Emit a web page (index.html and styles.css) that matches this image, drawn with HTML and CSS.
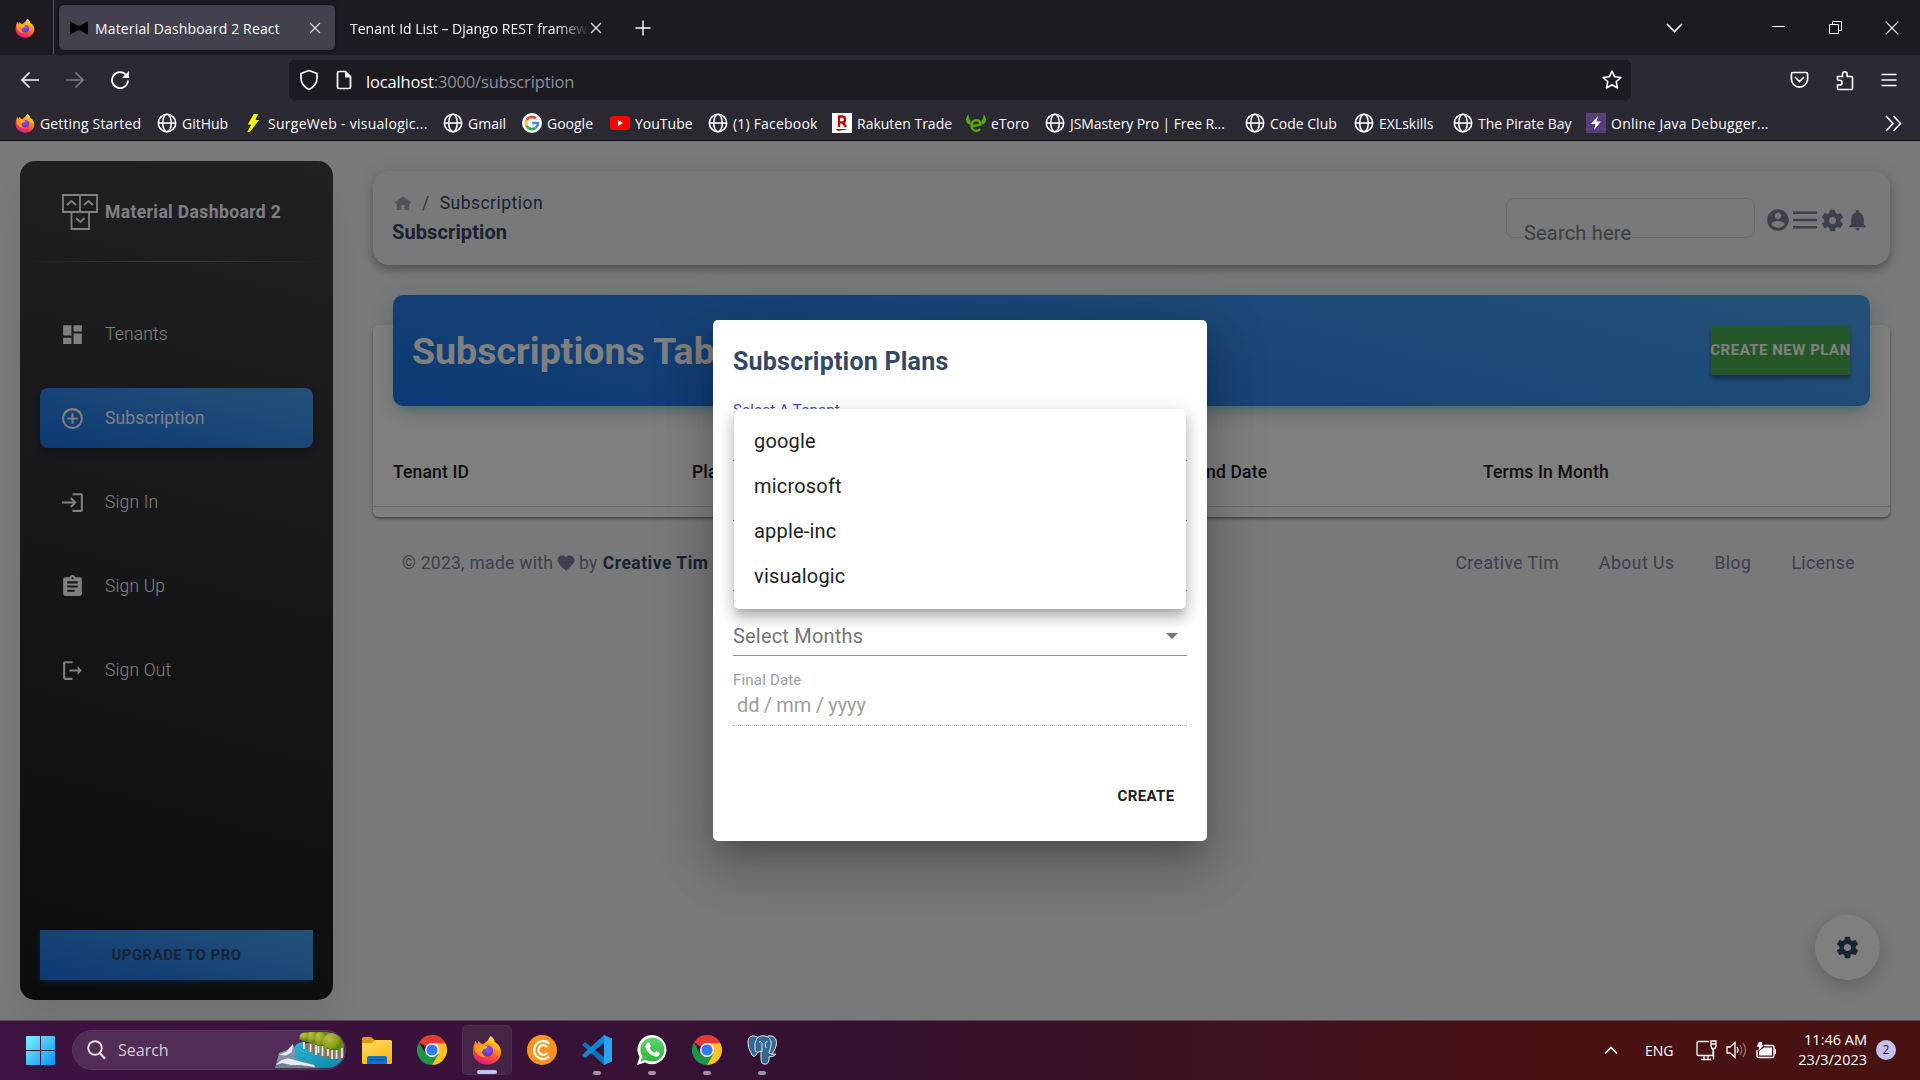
FILE: index.html
```html
<!DOCTYPE html>
<html lang="en">
<head>
<meta charset="utf-8">
<title>Material Dashboard 2 React</title>
<link rel="stylesheet" href="styles.css">
</head>
<body>
<svg class="defs" aria-hidden="true">
  <defs>
    <linearGradient id="ffBody" x1="0.8" y1="0" x2="0.3" y2="1"><stop offset="0" stop-color="#fff44f"/><stop offset=".35" stop-color="#ffa01f"/><stop offset=".65" stop-color="#ff4a3d"/><stop offset="1" stop-color="#e31587"/></linearGradient>
    <radialGradient id="ffCore" cx=".5" cy=".3" r=".8"><stop offset="0" stop-color="#a14bf5"/><stop offset="1" stop-color="#4a36b8"/></radialGradient>
    <linearGradient id="winTile" x1="0" y1="0" x2="1" y2="1"><stop offset="0" stop-color="#7ff0ff"/><stop offset="1" stop-color="#0a93f5"/></linearGradient>
    <linearGradient id="folderFront" x1="0" y1="0" x2="0.6" y2="1"><stop offset="0" stop-color="#ffdc70"/><stop offset="1" stop-color="#fcb90b"/></linearGradient>
    <linearGradient id="waFill" x1="0" y1="0" x2="0" y2="1"><stop offset="0" stop-color="#5fd66d"/><stop offset="1" stop-color="#2bb33e"/></linearGradient>
    <linearGradient id="river" x1="0" y1="0" x2="1" y2="1"><stop offset="0" stop-color="#2fb4d2"/><stop offset="1" stop-color="#0c86a8"/></linearGradient>
    <linearGradient id="rock" x1="0" y1="0" x2="0" y2="1"><stop offset="0" stop-color="#93a3b0"/><stop offset="1" stop-color="#6f7d88"/></linearGradient>
    <radialGradient id="tree" cx=".35" cy=".3" r=".8"><stop offset="0" stop-color="#b9c04c"/><stop offset=".6" stop-color="#8a9f1e"/><stop offset="1" stop-color="#4d6a0a"/></radialGradient>
  </defs>
  <symbol id="firefox" viewBox="0 0 32 32">
    <path fill="url(#ffBody)" d="M20 1c3 2 4 4.500 4.200 6.500C27 9 31 12.500 31 18.500 31 25.500 24.500 31.500 16.500 31.500S1 26 1 18c0-4 .8-7.500 2-10l.6-2 2 3 1.400-2.500C8.500 8.500 10 9.500 12 9.500c2.500-2 5-3 5.500-5C18 3 19 2 20 1z"/>
    <path fill="#ff9a1c" d="M2.500 10.500c3-1.500 7-.5 9.500 1 2 .2 3 .3 4 1-1 2-3 2.500-5 3-1 4 1 7 5 8-7 1-12-3-13.500-8z"/>
    <circle cx="16.500" cy="17" r="6" fill="url(#ffCore)"/>
    <path fill="#ffb52a" d="M9 11c3-.5 5.500 0 7.500 1.200-.6 2-2.500 2.600-4.600 3.200-.6.800-.8 1.600-.8 2.600-2-1.500-3-4-2.100-7z"/>
  </symbol>
  <symbol id="globe" viewBox="0 0 20 20"><g fill="none" stroke="#fbfbfe" stroke-width="1.600"><circle cx="10" cy="10" r="8.700"/><ellipse cx="10" cy="10" rx="4.300" ry="8.700"/><path d="M1.500 10h17"/></g></symbol>
  <symbol id="chrome" viewBox="0 0 30 30">
    <path fill="#e33b2e" d="M15 15 2 7.500A15 15 0 0 1 28 7.500L28 8H15z"/>
    <path fill="#1e9446" d="M2 7.500A15 15 0 0 0 15 30l6.500-11.200L15 15l-6.500 3.700z"/>
    <path fill="#fcc31e" d="M28 7.500A15 15 0 0 1 15 30l6.200-11L15 8z"/>
    <path fill="#e33b2e" d="M15 8h13.100A15 15 0 0 0 15 0L12 6z"/>
    <circle cx="15" cy="15" r="7" fill="#fff"/><circle cx="15" cy="15" r="5.600" fill="#2f7cf0"/>
  </symbol>
  <symbol id="gear" viewBox="0 0 24 24"><path d="M19.140 12.940c.04-.3.06-.61.06-.94 0-.32-.02-.64-.07-.94l2.030-1.580c.18-.14.23-.41.12-.61l-1.920-3.320c-.12-.22-.37-.29-.59-.22l-2.390.96c-.5-.38-1.030-.7-1.620-.94l-.36-2.540c-.04-.24-.24-.41-.48-.41h-3.840c-.24 0-.43.17-.47.41l-.36 2.540c-.59.24-1.130.57-1.620.94l-2.390-.96c-.22-.08-.47 0-.59.22L2.740 8.870c-.12.21-.08.47.12.61l2.030 1.580c-.05.3-.09.63-.09.94s.02.64.07.94l-2.030 1.580c-.18.14-.23.41-.12.61l1.920 3.320c.12.22.37.29.59.22l2.390-.96c.5.38 1.030.7 1.620.94l.36 2.540c.05.24.24.41.48.41h3.840c.24 0 .44-.17.47-.41l.36-2.540c.59-.24 1.130-.56 1.620-.94l2.390.96c.22.08.47 0 .59-.22l1.920-3.320c.12-.22.07-.47-.12-.61l-2.010-1.580zM12 15.200c-1.760 0-3.200-1.440-3.200-3.200s1.440-3.200 3.200-3.200 3.200 1.440 3.200 3.200-1.440 3.200-3.200 3.200z"/></symbol>
</svg>

<header class="browser">
  <div class="tabstrip">
    <div class="pinned"><svg width="20" height="24"><use href="#firefox" width="20" height="24"/></svg></div>
    <div class="tab active">
      <svg class="favicon" width="20" height="14" viewBox="0 0 20 14"><path fill="#050507" d="M1 1.500Q1 .5 2.500 1L8.500 4.500h3l6-3.500q1.500-.5 1.500.5v11q0 1-1.500.5l-6-3.500h-3l-6 3.500Q1 13.500 1 12.500z"/></svg>
      <span class="tab-title first">Material Dashboard 2 React</span>
      <svg width="12" height="12" viewBox="0 0 12 12"><path d="M1 1l10 10M11 1L1 11" stroke="#d8d8de" stroke-width="1.200"/></svg>
    </div>
    <div class="tab second">
      <span class="tab-title fade">Tenant Id List – Django REST framework</span>
      <svg width="12" height="12" viewBox="0 0 12 12"><path d="M1 1l10 10M11 1L1 11" stroke="#e8e8ee" stroke-width="1.200"/></svg>
    </div>
    <svg class="newtab" width="16" height="16" viewBox="0 0 16 16"><path d="M8 .5v15M.5 8h15" stroke="#fbfbfe" stroke-width="1.400"/></svg>
    <div class="winctl">
      <svg width="17" height="10" viewBox="0 0 17 10"><path d="M1 1l7.500 7.500L16 1" fill="none" stroke="#fbfbfe" stroke-width="1.600"/></svg>
      <svg class="w-min" width="13" height="13" viewBox="0 0 13 13"><path d="M0 5.500h13" stroke="#fff"/></svg>
      <svg class="w-res" width="13" height="13" viewBox="0 0 13 13"><path d="M.5 3.500h9v9h-9zM3.500 3.500v-3h9v9h-3" fill="none" stroke="#fff"/></svg>
      <svg class="w-cls" width="14" height="14" viewBox="0 0 14 14"><path d="M.7.7l12.600 12.600M13.300.7L.7 13.300" stroke="#fff" stroke-width="1.100"/></svg>
    </div>
  </div>

  <div class="navbar">
    <svg width="20" height="20" viewBox="0 0 20 20"><path d="M19 10H2M9.500 2.500L2 10l7.500 7.500" fill="none" stroke="#fbfbfe" stroke-width="1.700"/></svg>
    <svg width="20" height="20" viewBox="0 0 20 20"><path d="M1 10h17M10.500 2.500L18 10l-7.500 7.500" fill="none" stroke="#7b7a82" stroke-width="1.700"/></svg>
    <svg width="20" height="20" viewBox="0 0 20 20"><path d="M16.300 5.200A8 8 0 1 0 18 10.500" fill="none" stroke="#fbfbfe" stroke-width="1.800"/><path fill="#fbfbfe" d="M19 1v7h-7z"/></svg>
    <div class="urlbar">
      <svg width="20" height="22" viewBox="0 0 20 22"><path d="M10 1.500L2 4.500V9c0 5 3 9 8 11.500 5-2.500 8-6.500 8-11.500V4.500z" fill="none" stroke="#fbfbfe" stroke-width="1.700" stroke-linejoin="round"/></svg>
      <svg width="16" height="20" viewBox="0 0 16 20"><path d="M3 1.500h6.500l5 5V17q0 1.500-1.500 1.500H3Q1.500 18.500 1.500 17V3Q1.500 1.500 3 1.500z" fill="none" stroke="#fbfbfe" stroke-width="1.700"/><path fill="#fbfbfe" d="M9 1l6 6.500H9z"/></svg>
      <span class="url"><b>localhost</b>:3000/subscription</span>
      <svg class="star" width="22" height="22" viewBox="0 0 22 22"><path d="M11 2l2.600 5.800 6.300.7-4.700 4.200 1.300 6.300L11 15.800 5.500 19l1.300-6.300L2.100 8.500l6.300-.7z" fill="none" stroke="#fbfbfe" stroke-width="1.600" stroke-linejoin="round"/></svg>
    </div>
    <div class="tools">
      <svg width="19" height="18" viewBox="0 0 19 18"><path d="M3 1.500h13q1.600 0 1.600 1.600V8a8.100 8.100 0 0 1-16.200 0V3.100Q1.400 1.500 3 1.500zM5.500 6.500l4 4 4-4" fill="none" stroke="#fbfbfe" stroke-width="1.700" stroke-linecap="round"/></svg>
      <svg width="18" height="21" viewBox="0 0 18 21"><path d="M1.500 10V6.500h5V4a2.300 2.300 0 0 1 4.600 0v2.500h4.400q1 0 1 1V18.500q0 1-1 1H2.500q-1 0-1-1V15h2.200a2.300 2.300 0 0 0 0-4.700H1.500" fill="none" stroke="#fbfbfe" stroke-width="1.600"/></svg>
      <svg width="16" height="14" viewBox="0 0 16 14"><path d="M.5 1.500h15M.5 7h15M.5 12.500h15" stroke="#fbfbfe" stroke-width="1.500"/></svg>
    </div>
  </div>

  <div class="bookmarks">
    <div class="bm"><svg width="20" height="24"><use href="#firefox" width="20" height="24"/></svg><span>Getting Started</span></div>
    <div class="bm"><svg width="20" height="20"><use href="#globe"/></svg><span>GitHub</span></div>
    <div class="bm"><svg width="16" height="20" viewBox="0 0 16 20"><path d="M8.500.5h5.500L11 6.500h4L5 19.500H1.500L5.500 12H2z" fill="#f5f50a" stroke="#111" stroke-width=".8"/></svg><span>SurgeWeb - visualogic...</span></div>
    <div class="bm"><svg width="20" height="20"><use href="#globe"/></svg><span>Gmail</span></div>
    <div class="bm"><svg width="20" height="20" viewBox="0 0 20 20"><circle cx="10" cy="10" r="10" fill="#fff"/><g fill="none" stroke-width="2.600"><path d="M4.600 7.200A6 6 0 0 1 14 5.500" stroke="#ea4335"/><path d="M4.600 12.800a6 6 0 0 1 0-5.600" stroke="#fbbc05"/><path d="M13.800 14.700a6 6 0 0 1-9.200-1.900" stroke="#34a853"/><path d="M10.200 10H16a6 6 0 0 1-2.200 4.700" stroke="#4285f4"/></g></svg><span>Google</span></div>
    <div class="bm"><svg width="20" height="20" viewBox="0 0 20 20"><rect y="3" width="20" height="14" rx="3.500" fill="#f00"/><path fill="#fff" d="M8 7l5 3-5 3z"/></svg><span>YouTube</span></div>
    <div class="bm"><svg width="20" height="20"><use href="#globe"/></svg><span>(1) Facebook</span></div>
    <div class="bm"><svg width="20" height="20" viewBox="0 0 20 20"><path fill="#fff" d="M0 0h20v20H0z"/><path d="M7 14V3.500h3.200a2.900 2.900 0 0 1 0 5.800H7M10.500 9.300l3.500 4.700" fill="none" stroke="#bf0000" stroke-width="2.300"/><path fill="#bf0000" d="M4 16h13l-11 2z"/></svg><span>Rakuten Trade</span></div>
    <div class="bm"><svg width="20" height="20" viewBox="0 0 20 20"><path fill="#5aa70e" d="M2.500 1Q-2 6 1.500 10.500L5 12 4.500 8Q2 5 2.500 1zM17.500 1q4.500 5 1 9.500L15 12l.5-4q2.500-3 2-7z"/><path d="M6 13.200l8.500-1.800c-.3-2.600-1.800-4.200-4.200-4.200-2.800 0-4.700 2.200-4.700 5.200s2 5.400 4.700 5.400c1.700 0 3-.6 4-1.700" fill="none" stroke="#5aa70e" stroke-width="2.500"/></svg><span>eToro</span></div>
    <div class="bm"><svg width="20" height="20"><use href="#globe"/></svg><span>JSMastery Pro | Free R...</span></div>
    <div class="bm"><svg width="20" height="20"><use href="#globe"/></svg><span>Code Club</span></div>
    <div class="bm"><svg width="20" height="20"><use href="#globe"/></svg><span>EXLskills</span></div>
    <div class="bm"><svg width="20" height="20"><use href="#globe"/></svg><span>The Pirate Bay</span></div>
    <div class="bm"><svg width="20" height="20" viewBox="0 0 20 20"><path fill="#563d7c" d="M0 0h20v20H0z"/><path fill="#fff" d="M12 3l-7 8h4.500L8 17l7-8.500h-4.500z"/></svg><span>Online Java Debugger...</span></div>
    <svg class="more" width="17" height="17" viewBox="0 0 17 17"><path d="M1 1l7 7.500L1 16M8.500 1l7 7.500-7 7.500" fill="none" stroke="#fbfbfe" stroke-width="1.600"/></svg>
  </div>
</header>

<main class="page">
  <aside class="sidebar">
    <div class="brand">
      <svg width="36" height="36" viewBox="0 0 36 36" fill="none" stroke="#fff" stroke-width="1.800"><path d="M1 1h34v17H1zM18 1v17M9.500 18h17.500v17H9.500zM5 11l4.500-4 4.500 4M22 11l4.500-4 4.500 4M14 24l4.300 4 4.300-4"/></svg>
      <span>Material Dashboard 2</span>
    </div>
    <div class="rule"></div>
    <nav class="menu">
      <a class="item"><svg viewBox="0 0 24 24"><path d="M3 13h8V3H3v10zm0 8h8v-6H3v6zm10 0h8V11h-8v10zm0-18v6h8V3h-8z"/></svg><span>Tenants</span></a>
      <a class="item on"><svg viewBox="0 0 24 24"><path d="M13 7h-2v4H7v2h4v4h2v-4h4v-2h-4V7zm-1-5C6.480 2 2 6.480 2 12s4.480 10 10 10 10-4.480 10-10S17.520 2 12 2zm0 18c-4.410 0-8-3.590-8-8s3.590-8 8-8 8 3.590 8 8-3.590 8-8 8z"/></svg><span>Subscription</span></a>
      <a class="item"><svg viewBox="0 0 24 24"><path d="M11 7L9.600 8.400l2.600 2.600H2v2h10.200l-2.600 2.600L11 17l5-5-5-5zm9 12h-8v2h8c1.100 0 2-.9 2-2V5c0-1.100-.9-2-2-2h-8v2h8v14z"/></svg><span>Sign In</span></a>
      <a class="item"><svg viewBox="0 0 24 24"><path d="M19 3h-4.180C14.400 1.840 13.300 1 12 1s-2.400.84-2.820 2H5c-1.100 0-2 .9-2 2v14c0 1.100.9 2 2 2h14c1.100 0 2-.9 2-2V5c0-1.100-.9-2-2-2zm-7 0c.55 0 1 .45 1 1s-.45 1-1 1-1-.45-1-1 .45-1 1-1zm2 14H7v-2h7v2zm3-4H7v-2h10v2zm0-4H7V7h10v2z"/></svg><span>Sign Up</span></a>
      <a class="item"><svg viewBox="0 0 24 24"><path d="M5 5h7V3H5c-1.100 0-2 .9-2 2v14c0 1.100.9 2 2 2h7v-2H5V5zm16 7l-4-4v3H9v2h8v3l4-4z"/></svg><span>Sign Out</span></a>
    </nav>
    <button class="upgrade">UPGRADE TO PRO</button>
  </aside>

  <section class="content">
    <div class="topbar">
      <div class="crumbs">
        <div class="path">
          <svg width="20" height="20" viewBox="0 0 24 24"><path fill="#a0a6b8" d="M2.500 11.500L12 3.500l9.500 8v1h-2v7q0 1-1 1h-4.500V14.500h-4v6H5.500q-1 0-1-1v-7h-2z"/></svg>
          <i>/</i><span>Subscription</span>
        </div>
        <h6>Subscription</h6>
      </div>
      <div class="search"><span>Search here</span></div>
      <div class="actions">
        <svg width="26" height="26" viewBox="0 0 24 24"><path d="M12 2C6.480 2 2 6.480 2 12s4.480 10 10 10 10-4.480 10-10S17.520 2 12 2zm0 3c1.660 0 3 1.340 3 3s-1.340 3-3 3-3-1.340-3-3 1.340-3 3-3zm0 14.200c-2.500 0-4.710-1.280-6-3.220.03-1.990 4-3.080 6-3.080 1.990 0 5.970 1.090 6 3.080-1.290 1.940-3.500 3.220-6 3.220z"/></svg>
        <svg width="28" height="26" viewBox="0 0 28 26"><path d="M2 4.500h24v2.600H2zM2 11.700h24v2.600H2zM2 18.900h24v2.600H2z"/></svg>
        <svg width="27" height="27"><use href="#gear"/></svg>
        <svg width="25" height="26" viewBox="0 0 24 24"><path d="M12 22c1.100 0 2-.9 2-2h-4c0 1.100.89 2 2 2zm6-6v-5c0-3.070-1.640-5.640-4.500-6.320V4c0-.83-.67-1.500-1.500-1.500s-1.500.67-1.500 1.500v.68C7.630 5.360 6 7.920 6 11v5l-2 2v1h16v-1l-2-2z"/></svg>
      </div>
    </div>

    <div class="card">
      <div class="banner"><h3>Subscriptions Table</h3><button>CREATE NEW PLAN</button></div>
      <div class="thead"><span>Tenant ID</span><span>Plan Name</span><span>Start Date</span><span>End Date</span><span>Terms In Month</span></div>
    </div>

    <footer class="foot">
      <p><span>© 2023, made with</span><svg width="20" height="20" viewBox="0 0 24 24"><path fill="#7b809a" d="M12 21.350l-1.450-1.320C5.400 15.360 2 12.280 2 8.500 2 5.420 4.420 3 7.500 3c1.740 0 3.410.81 4.500 2.090C13.090 3.810 14.760 3 16.500 3 19.580 3 22 5.420 22 8.500c0 3.780-3.400 6.860-8.550 11.540L12 21.350z"/></svg><span>by</span><b>Creative Tim</b><span>for a better web.</span></p>
      <nav><a>Creative Tim</a><a>About Us</a><a>Blog</a><a>License</a></nav>
    </footer>
  </section>

  <div class="config"><svg width="27" height="27" fill="#344767"><use href="#gear"/></svg></div>

  <div class="backdrop">
    <div class="dialog">
      <h5>Subscription Plans</h5>
      <div class="field f-tenant"><label>Select A Tenant</label></div>
      <div class="field f-plan"></div>
      <div class="field f-start"></div>
      <div class="field f-months"><span>Select Months</span><svg width="12" height="6" viewBox="0 0 12 6"><path fill="#757575" d="M0 0h12L6 6z"/></svg></div>
      <div class="field f-final"><label>Final Date</label><span class="date">dd / mm / yyyy</span></div>
      <button class="create">CREATE</button>
      <ul class="options"><li>google</li><li>microsoft</li><li>apple-inc</li><li>visualogic</li></ul>
    </div>
  </div>
</main>

<footer class="taskbar">
  <svg class="start" width="29" height="29" viewBox="0 0 29 29"><path fill="url(#winTile)" d="M1 0h13v14H0V1q0-1 1-1zM15 0h13q1 0 1 1v13H15zM0 15h14v14H1q-1 0-1-1zM15 15h14v13q0 1-1 1H15z"/></svg>
  <div class="tsearch">
    <svg width="19" height="20" viewBox="0 0 19 20"><circle cx="8" cy="8" r="6.800" fill="none" stroke="#eadff0" stroke-width="1.900"/><path d="M13 13.300l5 5.500" stroke="#eadff0" stroke-width="2.200"/></svg>
    <span>Search</span>
    <svg class="scene" width="70" height="36" viewBox="0 0 70 36">
      <path fill="url(#river)" d="M18 19Q19 11 28 10l10 8 30 9q-3 8-11 9H38L20 27z"/>
      <path fill="#8a745c" d="M28 12l10-2 31 8v9q-22 0-33-7-6-4-8-8z"/>
      <path fill="#6d8a14" d="M24 7Q27 0 34 0h18q15 3 17 12v7q-9 1-14-3-7 0-9-3-7 1-9-3-6 1-13-3z"/>
      <g fill="url(#tree)"><ellipse cx="30" cy="4.500" rx="5.500" ry="4"/><ellipse cx="37" cy="5" rx="5" ry="6"/><ellipse cx="45" cy="7" rx="5.500" ry="7.500"/><ellipse cx="57" cy="10" rx="9.500" ry="9"/></g>
      <path d="M29 10v7M35.500 12v8M41 13v10M43.500 14v7M47.500 14v10M53 17v7M57 18v9M61.500 18v9M67 16v10" stroke="#e0f0fa" stroke-width="1.700"/>
      <path fill="url(#rock)" d="M0 36l4-15 8-3 6-6 2 7 0 8 12 3 9 6z"/>
      <path fill="#e4ebff" d="M4 23l8-3.500 6-7.500-1 8-6 3.500zM1 33q7-8 15-6l11 3 12 3 1 2-14-2-10 0-9-2z"/>
    </svg>
  </div>
  <div class="apps">
    <div class="app"><svg width="30" height="27" viewBox="0 0 30 27"><path fill="#e29a05" d="M0 1.500Q0 0 1.500 0h7q1 0 2 1L13 3.500V8H0z"/><path fill="url(#folderFront)" d="M0 6h10l3-3h15.500Q30 3 30 4.500v21q0 1.500-1.500 1.500h-27Q0 27 0 25.500z"/><path fill="#1073c6" d="M5 27v-6q0-2 2-2h16q2 0 2 2v6z"/><path fill="#0b4f91" d="M8 22h14v1.300H8z"/></svg></div>
    <div class="app"><svg width="30" height="30"><use href="#chrome"/></svg></div>
    <div class="app current"><svg width="30" height="30"><use href="#firefox"/></svg></div>
    <div class="app"><svg width="30" height="30" viewBox="0 0 30 30"><circle cx="15" cy="15" r="15" fill="#f7931e"/><g fill="none" stroke="#fff" stroke-width="2.300" stroke-linecap="round"><path d="M21.500 7.800a9 9 0 1 0 0 14.400"/><path d="M19.500 11.500a4.800 4.800 0 1 0 0 7"/></g></svg></div>
    <div class="app open"><svg width="30" height="30" viewBox="0 0 30 30"><path fill="#0f6fb9" d="M0 10l3-3 19 15v8z"/><path fill="#1786d0" d="M0 20l3 3L22 8V0z"/><path fill="#27a5f2" d="M22 0l8 3.500v23L22 30z"/></svg></div>
    <div class="app open"><svg width="30" height="30" viewBox="0 0 30 30"><path fill="#fff" d="M15.500 0A14.600 14.600 0 1 1 8 27.500L0 30l2.500-8A14.600 14.600 0 0 1 15.500 0z"/><circle cx="15.400" cy="14.600" r="12" fill="url(#waFill)"/><path fill="url(#waFill)" d="M3.800 26.300l2-7 5 5z"/><path fill="#fff" d="M10 8q1.500-1.500 2.500 0l1.300 2.700q.3.800-1.300 2.300 1.700 3.200 5 4.700 1.400-1.800 2.200-1.500l2.600 1.300q1.300 1-.2 2.900-1.700 1.700-4 1.200Q10.500 19.500 8.400 12 8.200 9.500 10 8z"/></svg></div>
    <div class="app open"><svg width="30" height="30"><use href="#chrome"/></svg></div>
    <div class="app open"><svg width="30" height="30" viewBox="0 0 30 30"><g fill="#336791" stroke="#dfe8ef" stroke-width="1"><path d="M8 1Q2 0 1 6t4 14q2 3 4 0l2-3 1-14z"/><path d="M21 1q6-1 8 4t-4 14l-3 1-3-10z"/><path d="M10 3q5-4 11-1 4 3 3 9l-2 7q2 2 7 1-2 3-7 3v3q-1 5-5 4-3 0-3-6v-7q-5 3-6-1-1-7 2-12z"/></g><path d="M12 7q2-1 3 1v9M21 7q-2-1-3 1l1 5" fill="none" stroke="#dfe8ef"/></svg></div>
  </div>
  <div class="tray">
    <svg class="t-up" width="14" height="9" viewBox="0 0 14 9"><path d="M1 7.500l6-6 6 6" fill="none" stroke="#fff" stroke-width="1.700"/></svg>
    <span class="lang">ENG</span>
    <svg class="t-net" width="21" height="21" viewBox="0 0 21 21" fill="none" stroke="#fff" stroke-width="1.300"><path d="M13 1.500H2.500q-1.500 0-1.500 1.500v11q0 1.500 1.500 1.500H17V9M5 19.500h10M8 15.500v4M12 15.500v4M15 1h5v5l-1 2.500h-3L15 6zM15 4h5M17.500 8.500v11"/></svg>
    <svg class="t-vol" width="21" height="18" viewBox="0 0 21 18" fill="none" stroke="#fff" stroke-width="1.300"><path d="M1 6h3l5-4.500v15L4 12H1zM11 6q2 3 0 6"/><path d="M14 4q3.500 5 0 10M17 2q5 7 0 14" opacity=".4"/></svg>
    <svg class="t-bat" width="21" height="17" viewBox="0 0 21 17"><path d="M8 3.500h8q2 0 2 2v8q0 2-2 2H3q-2 0-2-2V8" fill="none" stroke="#fff" stroke-width="1.400"/><path fill="#fff" d="M8 5.500h8v8H3V9zM18.500 7H20v5h-1.500zM3 0h3v3h2L2.500 9 3 5H.5z"/></svg>
    <div class="clock"><span>11:46 AM</span><span>23/3/2023</span></div>
    <div class="badge">2</div>
  </div>
</footer>
</body>
</html>
```
FILE: styles.css
```css
* { box-sizing: border-box; }
body { margin: 0; width: 1920px; height: 1080px; overflow: hidden; font-family: "Roboto", sans-serif; display: flex; flex-direction: column; }
h3, h5, h6, p, ul { margin: 0; padding: 0; }
svg { display: block; flex: none; }
.defs { position: absolute; width: 0; height: 0; }
button { border: 0; font-family: inherit; padding: 0; }

/* browser chrome */
.browser { height: 141px; background: #2b2a33; border-bottom: 1px solid #0c0c0d; color: #fbfbfe; font-family: "Open Sans", sans-serif; font-size: 14px; flex: none; }
.tabstrip { height: 55px; background: #1c1b22; display: flex; align-items: center; }
.pinned { width: 54px; height: 55px; padding-left: 15px; border-right: 1px solid #55545c; display: flex; align-items: center; }
.tab { display: flex; align-items: center; height: 45px; white-space: nowrap; }
.tab.active { width: 276px; margin-left: 5px; padding: 0 14px 0 10px; background: #42414d; border-radius: 5px; box-shadow: 0 0 4px rgba(0,0,0,.5); }
.favicon { margin-right: 6px; }
.tab-title { flex: 1; overflow: hidden; padding-top: 1px; }
.tab-title.first { letter-spacing: .15px; }
.tab.second { width: 267px; padding-left: 15px; }
.fade { mask-image: linear-gradient(90deg, #000 205px, transparent 240px); }
.newtab { margin-left: 33px; }
.winctl { margin-left: auto; margin-right: 21px; display: flex; align-items: center; }
.w-min { margin-left: 89px; }
.w-res { margin-left: 44px; }
.w-cls { margin-left: 43px; }
.navbar { height: 50px; display: flex; align-items: center; gap: 25px; padding-left: 20px; }
.urlbar { margin-left: 134px; width: 1342px; height: 40px; background: #1c1b22; border-radius: 5px; display: flex; align-items: center; padding: 0 8px 0 10px; }
.urlbar svg + svg { margin-left: 17px; }
.url { margin-left: 14px; font-size: 16.500px; letter-spacing: -.15px; color: #8f8f98; padding-top: 2px; }
.url b { font-weight: 400; color: #fbfbfe; }
.urlbar .star { margin-left: auto; }
.tools { margin-left: 134px; display: flex; align-items: center; gap: 27px; }
.bookmarks { height: 36px; display: grid; grid-template-columns: 142px 88px 198px 79px 88px 98px 124px 134px 79px 200px 109px 99px 133px 299px 17px; align-items: center; padding-left: 15px; }
.bm { display: flex; align-items: center; gap: 5px; white-space: nowrap; }
.bm:nth-child(1) { letter-spacing: .15px; }
.bm:nth-child(3) { letter-spacing: .28px; }
.bm:nth-child(3) span { margin-left: 2px; }
.bm:nth-child(7) { letter-spacing: .2px; }
.bm:nth-child(10) { letter-spacing: -.1px; }
.bm:nth-child(14) { letter-spacing: .27px; }

/* application page */
.page { position: relative; height: 879px; flex: none; background: #f0f2f5; display: flex; padding: 20px 30px 20px 20px; overflow: hidden; }
.sidebar { width: 313px; height: 839px; border-radius: 15px; background: linear-gradient(195deg, #42424a, #191919); padding: 0 20px 20px; display: flex; flex-direction: column; color: #fff; box-shadow: 0 25px 33px 0 rgba(0,0,0,.06); }
.brand { height: 100px; padding: 2px 0 0 22px; display: flex; align-items: center; gap: 7px; font-size: 17.500px; font-weight: 700; letter-spacing: .38px; }
.rule { height: 1px; margin: 0 -15px; background: linear-gradient(90deg, transparent, rgba(255,255,255,.35), transparent); }
.menu { padding-top: 42px; display: flex; flex-direction: column; gap: 24px; }
.item { height: 60px; border-radius: 8px; display: flex; align-items: center; padding-left: 20px; gap: 20px; font-size: 17.500px; font-weight: 300; letter-spacing: .15px; }
.item svg { width: 25px; height: 25px; fill: #fff; }
.item.on { background: linear-gradient(195deg, #49a3f1, #1a73e8); font-weight: 400; box-shadow: 0 4px 8px rgba(0,0,0,.3); }
.upgrade { margin-top: auto; height: 50px; background: linear-gradient(195deg, #49a3f1, #1a73e8); color: #344767; font-size: 15px; font-weight: 700; letter-spacing: .45px; box-shadow: 0 3px 6px rgba(26,115,232,.3); }

.content { margin-left: 40px; width: 1517px; padding-top: 10px; }
.topbar { height: 94px; border-radius: 16px; background: #f0f2f5; box-shadow: 0 5px 8px rgba(0,0,0,.28), 0 0 20px rgba(0,0,0,.06); display: flex; padding: 0 20px; }
.crumbs { padding-top: 19px; color: #344767; flex: 1; }
.path { display: flex; align-items: center; height: 25px; font-size: 17.500px; letter-spacing: .47px; }
.path i { font-style: normal; margin: 0 10px 0 9px; color: #6c757d; }
.crumbs h6 { font-size: 20px; line-height: 32px; margin: 1px 0 0 -1px; font-weight: 700; letter-spacing: .1px; }
.search { width: 249px; height: 40px; margin-top: 27px; border: 1px solid #d6d9dc; border-radius: 8px; font-size: 20px; letter-spacing: .19px; color: #7b7d80; padding: 22px 0 0 17px; line-height: 24px; white-space: nowrap; }
.actions { display: flex; align-items: center; padding-top: 4px; margin: 0 0 0 10px; width: 105px; }
.actions svg { fill: #7b809a; }
.actions svg:last-child { margin-left: -1px; }
.card { margin-top: 60px; height: 192px; background: #fff; border-radius: 6px; box-shadow: 0 2px 2px rgba(0,0,0,.3), 0 1px 5px rgba(0,0,0,.15); display: flex; flex-direction: column; }
.banner { margin: -30px 20px 0; height: 111px; border-radius: 10px; flex: none; background: linear-gradient(195deg, #49a3f1, #1a73e8); box-shadow: 0 5px 25px rgba(0,0,0,.14), 0 9px 13px -6px rgba(0,187,212,.4); display: flex; align-items: center; justify-content: space-between; padding: 0 20px 0 19px; }
.banner h3 { font-size: 37.500px; line-height: 44px; font-weight: 700; color: #fff; }
.banner button { width: 139px; height: 50px; margin-bottom: 1px; padding-bottom: 1px; background: #4caf50; color: #fff; font-size: 15px; font-weight: 700; letter-spacing: .5px; white-space: nowrap; box-shadow: 0 4px 4px rgba(0,0,0,.35); display: flex; justify-content: center; align-items: center; }
.thead { flex: none; height: 101px; padding: 51px 0 0 20px; display: grid; grid-template-columns: 299px 246px 258px 287px 300px; align-items: start; font-size: 17.500px; line-height: 30px; font-weight: 500; letter-spacing: .16px; color: #212121; border-bottom: 1px solid #d2d2d2; }
.foot { margin-top: 30px; display: flex; justify-content: space-between; align-items: center; height: 32px; padding: 0 35px 0 29px; font-size: 17.500px; color: #7b809a; white-space: nowrap; }
.foot p { display: flex; align-items: center; letter-spacing: .28px; padding-bottom: 1px; }
.foot p svg { margin: 0 3px; }
.foot b { color: #344767; font-weight: 700; margin: 0 4px 0 5px; letter-spacing: .5px; }
.foot nav { display: flex; gap: 40px; letter-spacing: .5px; }
.config { position: absolute; left: 1815px; top: 774px; width: 65px; height: 65px; border-radius: 50%; background: #fff; display: flex; align-items: center; justify-content: center; box-shadow: 0 6px 18px rgba(0,0,0,.2); }

/* dialog */
.backdrop { position: absolute; inset: 0; background: rgba(0,0,0,.5); display: flex; align-items: center; justify-content: center; }
.dialog { position: relative; width: 494px; height: 521px; background: #fff; border-radius: 5px; padding: 20px; display: flex; flex-direction: column; box-shadow: 0 14px 19px -9px rgba(0,0,0,.2), 0 30px 48px 4px rgba(0,0,0,.14), 0 11px 58px 10px rgba(0,0,0,.12); }
.dialog h5 { font-size: 25px; line-height: 44px; height: 42px; font-weight: 700; color: #344767; letter-spacing: .22px; }
.field { border-bottom: 1px solid #949494; font-size: 20px; letter-spacing: .19px; color: #757575; flex: none; display: flex; flex-direction: column; justify-content: flex-end; }
.field label { font-size: 15px; line-height: 20px; }
.field span { line-height: 38px; }
.f-tenant { height: 79px; justify-content: flex-start; padding-top: 18px; color: #3f51b5; }
.f-plan { height: 60px; }
.f-start { height: 70px; }
.f-months { height: 65px; flex-direction: row; justify-content: space-between; align-items: flex-end; padding-right: 9px; }
.f-months svg { margin-bottom: 16px; }
.f-final { height: 70px; color: #9e9e9e; border-bottom: 1px dotted #b0b0b0; padding-bottom: 4px; }
.field .date { padding-left: 4px; line-height: 31px; letter-spacing: 0; word-spacing: -.7px; }
.create { position: absolute; right: 20px; bottom: 23px; width: 82px; height: 45px; background: none; font-size: 15px; font-weight: 700; letter-spacing: .35px; color: #212121; }
.options { position: absolute; left: 21px; top: 89px; width: 452px; height: 200px; background: #fff; border-radius: 5px; padding: 10px 0; list-style: none; box-shadow: 0 6px 7px -4px rgba(0,0,0,.2), 0 10px 13px 1px rgba(0,0,0,.14), 0 4px 18px 3px rgba(0,0,0,.12); }
.options li { height: 45px; line-height: 45px; padding-left: 20px; font-size: 20px; letter-spacing: .19px; color: #212121; }

/* desktop taskbar */
.taskbar { height: 60px; flex: none; display: flex; align-items: center; background: linear-gradient(90deg, #3d1341 0, #38123a 25%, #34122f 45%, #3c1222 62%, #4a1113 80%, #481212 100%); border-top: 1px solid #5c4450; color: #fff; font-family: "Open Sans", sans-serif; font-size: 14px; padding-bottom: 1px; }
.start { margin-left: 26px; }
.tsearch { margin-left: 17px; width: 274px; height: 40px; border-radius: 20px; background: #512c55; border: 1px solid #583759; display: flex; align-items: center; padding-left: 14px; overflow: hidden; }
.tsearch span { margin-left: 12px; font-size: 16px; color: #d8cbda; }
.scene { margin-left: auto; border-radius: 0 18px 18px 0; }
.apps { display: flex; gap: 5px; margin-left: 6px; }
.app { position: relative; width: 50px; height: 50px; border-radius: 5px; display: flex; align-items: center; justify-content: center; }
.app.current { background: #452446; border: 1px solid #4f2e50; }
.app.open::after, .app.current::after { content: ""; position: absolute; bottom: 0; width: 8px; height: 4px; border-radius: 2px; background: #a590a6; }
.app.current::after { width: 20px; background: #c5c0ec; }
.tray { margin-left: auto; display: flex; align-items: center; padding-right: 24px; }
.lang { margin-left: 27px; width: 29px; }
.t-net { margin-left: 22px; }
.t-vol { margin-left: 9px; }
.t-bat { margin-left: 9px; }
.clock { width: 90px; display: flex; flex-direction: column; align-items: flex-end; line-height: 20px; font-size: 14.500px; }
.badge { margin-left: 9px; width: 20px; height: 20px; border-radius: 50%; background: #c6c1ec; color: #2b1a2b; font-size: 12px; line-height: 20px; text-align: center; }
```
